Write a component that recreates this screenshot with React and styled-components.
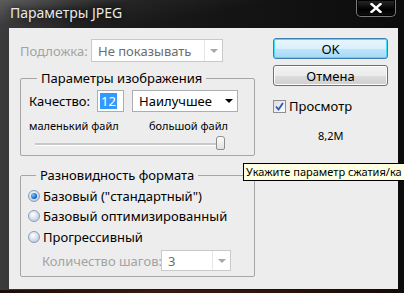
import React from 'react';
import { styled, createGlobalStyle } from 'styled-components';

const GlobalStyle = createGlobalStyle`
  html, body {
    margin: 0;
    padding: 0;
    background: #000;
    overflow: hidden;
  }
  body {
    font-family: "Noto Sans", "Open Sans", sans-serif;
    font-size: 13px;
    color: #000;
  }
`;

const Window = styled.div`
  position: relative;
  width: 404px;
  height: 293px;
  display: flex;
  flex-direction: column;
  background: linear-gradient(to right, #3c3c3c 0%, #1c1c1c 20%, #0c0c0c 100%);
  overflow: hidden;
`;

const TitleBar = styled.div`
  height: 28px;
  display: flex;
  align-items: flex-start;
  justify-content: space-between;
  padding-left: 10px;
  padding-right: 8px;
  background: linear-gradient(170deg, rgba(120,120,120,0.55) 0%, rgba(60,60,60,0.3) 25%, rgba(0,0,0,0) 50%);
`;

const Title = styled.div`
  margin-top: 3px;
  font-size: 14px;
  color: #e8e8e8;
  text-shadow: 0 0 6px #000;
`;

const CloseButton = styled.div`
  width: 40px;
  height: 17px;
  box-sizing: border-box;
  border: 1px solid #7a7a7a;
  border-top: none;
  border-radius: 0 0 5px 5px;
  background: linear-gradient(#2a2a2a, #000 60%, #111);
  box-shadow: inset 0 0 0 1px #000;
  display: flex;
  align-items: center;
  justify-content: center;
`;

const BottomEdge = styled.div`
  position: absolute;
  left: 0;
  right: 0;
  bottom: 0;
  height: 3px;
  background: linear-gradient(to right, #1a0d08, #3a1a10 40%, #2a140c 70%, #140a06);
`;

const Client = styled.div`
  flex: 1;
  margin: 0 6px 4px 9px;
  background: #ededed;
  display: flex;
  position: relative;
`;

const LeftColumn = styled.div`
  width: 246px;
  display: flex;
  flex-direction: column;
  padding-left: 11px;
  box-sizing: border-box;
`;

const RightColumn = styled.div`
  display: flex;
  flex-direction: column;
  padding-left: 18px;
  padding-top: 10px;
`;

const FieldRow = styled.div`
  display: flex;
  align-items: center;
  height: ${p => p.$h || 22}px;
  margin-top: ${p => p.$mt || 0}px;
  padding-left: ${p => p.$pl || 0}px;
`;

const Label = styled.span`
  color: ${p => (p.$disabled ? '#a3a3a3' : '#000')};
  width: ${p => (p.$w ? p.$w + 'px' : 'auto')};
  flex-shrink: 0;
  white-space: nowrap;
`;

const SelectBox = styled.div`
  width: ${p => p.$w}px;
  height: ${p => p.$h || 23}px;
  flex-shrink: 0;
  box-sizing: border-box;
  margin-left: ${p => p.$ml || 0}px;
  border: 1px solid ${p => (p.$disabled ? '#c9c9c9' : '#abadb3')};
  background: #fff;
  display: flex;
  align-items: center;
  padding-left: 6px;
  color: ${p => (p.$disabled ? '#6d6d6d' : '#000')};
`;

const SelectText = styled.span`
  flex: 1;
  white-space: nowrap;
`;

const ArrowCell = styled.div`
  width: 17px;
  align-self: stretch;
  display: flex;
  align-items: center;
  justify-content: center;
  border-left: 1px solid ${p => (p.$sep ? '#e6e6e6' : 'transparent')};
`;

const Arrow = styled.div`
  width: 0;
  height: 0;
  border-left: 4px solid transparent;
  border-right: 4px solid transparent;
  border-top: 4px solid ${p => (p.$disabled ? '#a8a8a8' : '#000')};
`;

const Group = styled.fieldset`
  margin: ${p => p.$mt}px 0 0 0;
  width: 235px;
  height: ${p => p.$h}px;
  box-sizing: border-box;
  border: 1px solid #a6a6a6;
  border-radius: 2px;
  padding: 0 0 0 ${p => p.$pl || 8}px;
  min-width: 0;
`;

const Legend = styled.legend`
  padding: 0 4px;
  margin-left: 8px;
  line-height: 18px;
  color: #000;
`;

const QualityInput = styled.div`
  width: 27px;
  height: 22px;
  box-sizing: border-box;
  border: 1px solid #abadb3;
  background: #fff;
  margin-left: 7px;
  display: flex;
  align-items: center;
  padding-left: 2px;
`;

const Selected = styled.span`
  background: #3399ff;
  color: #fff;
  line-height: 16px;
  padding: 0 1px;
`;

const SmallRow = styled.div`
  display: flex;
  justify-content: space-between;
  width: 199px;
  margin-top: 7px;
  font-size: 11px;
  line-height: 14px;
`;

const SliderTrack = styled.div`
  position: relative;
  width: 190px;
  height: 2px;
  margin: 10px 0 0 6px;
  background: #c8c8c8;
  border-bottom: 1px solid #fff;
`;

const SliderThumb = styled.div`
  position: absolute;
  left: 181px;
  top: -7px;
  width: 9px;
  height: 14px;
  box-sizing: border-box;
  border: 1px solid #8e8e8e;
  border-radius: 3px 3px 2px 2px;
  background: linear-gradient(#fdfdfd, #e2e2e2);
`;

const RadioRow = styled.label`
  display: flex;
  align-items: center;
  height: 20px;
  margin-top: ${p => p.$mt || 0}px;
  gap: 3px;
  white-space: nowrap;
`;

const Radio = styled.span`
  width: 12px;
  height: 12px;
  box-sizing: border-box;
  border-radius: 50%;
  border: 1px solid #8a9cb5;
  background: radial-gradient(circle at 40% 35%, #ffffff, #c6d3e3 70%, #a9bbd1);
  display: flex;
  align-items: center;
  justify-content: center;
  &::after {
    content: '';
    display: ${p => (p.$checked ? 'block' : 'none')};
    width: 6px;
    height: 6px;
    border-radius: 50%;
    background: radial-gradient(circle at 35% 35%, #7fc6ff, #0b5cc4 70%, #0a3d8a);
  }
`;

const Button = styled.div`
  width: 115px;
  height: 21px;
  box-sizing: border-box;
  margin-top: ${p => p.$mt || 0}px;
  border: 1px solid ${p => (p.$primary ? '#3c7fb1' : '#707070')};
  border-radius: 3px;
  background: ${p =>
    p.$primary
      ? 'linear-gradient(#eaf6fd 0%, #d9f0fc 50%, #bee6fd 51%, #a7d9f5 100%)'
      : 'linear-gradient(#f2f2f2 0%, #ebebeb 50%, #dddddd 51%, #cfcfcf 100%)'};
  box-shadow: inset 0 0 0 1px ${p => (p.$primary ? '#48dcfb' : '#fcfcfc')};
  display: flex;
  align-items: center;
  justify-content: center;
`;

const CheckRow = styled.label`
  display: flex;
  align-items: center;
  gap: 3px;
  margin-top: 11px;
`;

const CheckBox = styled.span`
  width: 13px;
  height: 13px;
  box-sizing: border-box;
  border: 1px solid #8f8f8f;
  background: linear-gradient(135deg, #dcdcdc, #fff);
  display: flex;
  align-items: center;
  justify-content: center;
`;

const SizeText = styled.div`
  font-size: 11px;
  margin: 13px 0 0 45px;
`;

const Tooltip = styled.div`
  position: absolute;
  left: 234px;
  top: 135px;
  width: 190px;
  height: 18px;
  box-sizing: border-box;
  border: 1px solid #000;
  background: #ffffe1;
  padding: 0 0 0 2px;
  font-size: 11px;
  line-height: 16px;
  white-space: nowrap;
`;

export default function App() {
  return (
    <Window>
      <GlobalStyle />
      <TitleBar>
        <Title>Параметры JPEG</Title>
        <CloseButton>
          <svg width="12" height="10" viewBox="0 0 12 10">
            <path d="M1.5 1 L10.5 9 M10.5 1 L1.5 9" stroke="#fff" strokeWidth="2.4" strokeLinecap="square" />
          </svg>
        </CloseButton>
      </TitleBar>
      <Client>
        <LeftColumn>
          <FieldRow $h={23} $mt={11}>
            <Label $disabled $w={71}>Подложка:</Label>
            <SelectBox $w={132} $disabled>
              <SelectText>Не показывать</SelectText>
              <ArrowCell $sep><Arrow $disabled /></ArrowCell>
            </SelectBox>
          </FieldRow>

          <Group $mt={7} $h={87}>
            <Legend>Параметры изображения</Legend>
            <FieldRow $mt={3}>
              <Label>Качество:</Label>
              <QualityInput><Selected>12</Selected></QualityInput>
              <SelectBox $w={106} $h={22} $ml={8}>
                <SelectText>Наилучшее</SelectText>
                <ArrowCell><Arrow /></ArrowCell>
              </SelectBox>
            </FieldRow>
            <SmallRow>
              <span>маленький файл</span>
              <span>большой файл</span>
            </SmallRow>
            <SliderTrack>
              <SliderThumb />
            </SliderTrack>
          </Group>

          <Group $mt={10} $h={111} $pl={7}>
            <Legend>Разновидность формата</Legend>
            <RadioRow $mt={2}><Radio $checked />Базовый ("стандартный")</RadioRow>
            <RadioRow><Radio />Базовый оптимизированный</RadioRow>
            <RadioRow $mt={1}><Radio />Прогрессивный</RadioRow>
            <FieldRow $h={21} $mt={3} $pl={14}>
              <Label $disabled $w={119}>Количество шагов:</Label>
              <SelectBox $w={70} $h={21} $disabled>
                <SelectText>3</SelectText>
                <ArrowCell $sep><Arrow $disabled /></ArrowCell>
              </SelectBox>
            </FieldRow>
          </Group>
        </LeftColumn>

        <RightColumn>
          <Button $primary>OK</Button>
          <Button $mt={6}>Отмена</Button>
          <CheckRow>
            <CheckBox>
              <svg width="9" height="9" viewBox="0 0 9 9">
                <path d="M1 4.5 L3.5 7.5 L8 1" stroke="#2a58b8" strokeWidth="1.8" fill="none" />
              </svg>
            </CheckBox>
            Просмотр
          </CheckRow>
          <SizeText>8,2M</SizeText>
        </RightColumn>

        <Tooltip>Укажите параметр сжатия/ка</Tooltip>
      </Client>
      <BottomEdge />
    </Window>
  );
}
